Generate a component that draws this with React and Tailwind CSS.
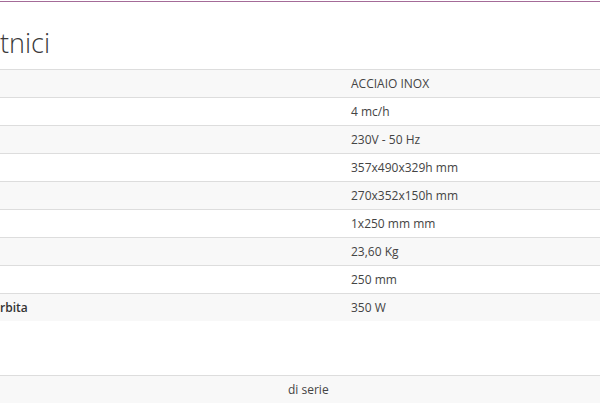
import React from 'react';

const rows = [
  { label: '', value: 'ACCIAIO INOX' },
  { label: '', value: '4 mc/h' },
  { label: '', value: '230V - 50 Hz' },
  { label: '', value: '357x490x329h mm' },
  { label: '', value: '270x352x150h mm' },
  { label: '', value: '1x250 mm mm' },
  { label: '', value: '23,60 Kg' },
  { label: '', value: '250 mm' },
  { label: 'rbita', value: '350 W' },
];

export default function App() {
  return (
    <div className="w-[600px] h-[417px] bg-white overflow-hidden font-['Open_Sans',sans-serif] text-[#333]">
      <div className="h-[1px] bg-white" />
      <div className="h-[1px] bg-[#a46b98]" />

      {/* section title, cut off at the left edge */}
      <h2 className="mt-[26px] h-[41px] text-[27px] font-light leading-[30px] text-[#3a3a3a]">tnici</h2>

      {/* technical data */}
      <div>
        {rows.map((row, i) => (
          <div
            key={i}
            className={`flex h-[28px] items-center border-t border-[#dddddd] text-[12px] ${
              i % 2 === 0 ? 'bg-[#f8f8f8]' : 'bg-white'
            }`}
          >
            <div className="w-[351px] font-semibold text-[#333]">{row.label}</div>
            <div className="text-[#444]">{row.value}</div>
          </div>
        ))}
      </div>

      {/* accessories */}
      <div className="mt-[54px] flex h-[28px] items-center border-t border-[#dddddd] bg-[#f8f8f8] text-[12px] text-[#444]">
        <div className="w-[288px]" />
        <div>di serie</div>
      </div>
    </div>
  );
}
